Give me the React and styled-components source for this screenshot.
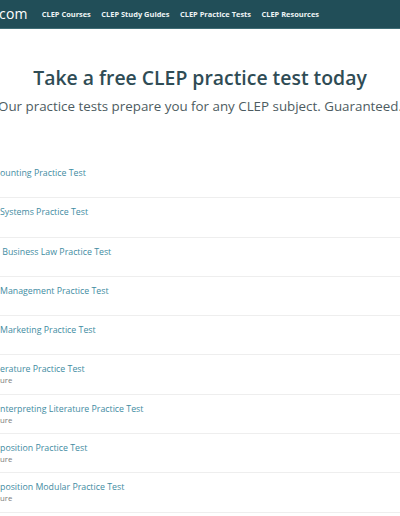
import React from "react";
import styled, { createGlobalStyle } from "styled-components";

const GlobalStyle = createGlobalStyle`
  html, body {
    margin: 0;
    padding: 0;
    background: #ffffff;
    font-family: "Open Sans", "Liberation Sans", sans-serif;
    overflow: hidden;
  }
`;

const tests = [
  { name: "ounting Practice Test" },
  { name: "Systems Practice Test" },
  { name: " Business Law Practice Test" },
  { name: "Management Practice Test" },
  { name: "Marketing Practice Test" },
  { name: "erature Practice Test", sub: "ure" },
  { name: "nterpreting Literature Practice Test", sub: "ure" },
  { name: "position Practice Test", sub: "ure" },
  { name: "position Modular Practice Test", sub: "ure" },
];

const Page = styled.div`
  width: 400px;
  height: 516px;
  overflow: hidden;
`;

const TopBar = styled.header`
  height: 29px;
  background: #214e58;
  border-bottom: 1px solid #3f6d76;
  display: flex;
  align-items: center;
  padding-bottom: 1px;
  box-sizing: border-box;
`;

const Logo = styled.span`
  color: #ffffff;
  font-size: 14px;
  letter-spacing: 0.2px;
  margin-right: 14px;
  margin-left: -1px;
`;

const Nav = styled.nav`
  display: flex;
  gap: 10.5px;
`;

const NavLink = styled.a`
  color: #eef4f5;
  font-size: 7.45px;
  font-weight: 700;
  white-space: nowrap;
`;

const Hero = styled.section`
  display: flex;
  flex-direction: column;
  align-items: center;
  padding-top: 36px;
  padding-bottom: 44px;
`;

const Title = styled.h1`
  margin: 0;
  color: #2f4c55;
  font-size: 19.4px;
  font-weight: 600;
  white-space: nowrap;
  line-height: 26px;
`;

const Subtitle = styled.p`
  margin: 6px 0 0;
  color: #4d5c61;
  font-size: 13.35px;
  white-space: nowrap;
  line-height: 18px;
`;

const List = styled.ul`
  list-style: none;
  margin: 0;
  padding: 0;
`;

const Row = styled.li`
  height: 39.3px;
  border-bottom: 1px solid #eeeeee;
  padding-top: 8px;
  box-sizing: border-box;
  display: flex;
  flex-direction: column;
`;

const TestLink = styled.a`
  color: #3f8ca2;
  font-size: 8.8px;
  line-height: 12px;
  white-space: pre;
`;

const Category = styled.span`
  color: #7b7b7b;
  font-size: 7.8px;
  line-height: 10px;
`;

export default function App() {
  return (
    <Page>
      <GlobalStyle />
      <TopBar>
        <Logo>com</Logo>
        <Nav>
          <NavLink>CLEP Courses</NavLink>
          <NavLink>CLEP Study Guides</NavLink>
          <NavLink>CLEP Practice Tests</NavLink>
          <NavLink>CLEP Resources</NavLink>
        </Nav>
      </TopBar>
      <Hero>
        <Title>Take a free CLEP practice test today</Title>
        <Subtitle>Our practice tests prepare you for any CLEP subject. Guaranteed.</Subtitle>
      </Hero>
      <List>
        {tests.map((t, i) => (
          <Row key={i}>
            <TestLink>{t.name}</TestLink>
            {t.sub && <Category>{t.sub}</Category>}
          </Row>
        ))}
      </List>
    </Page>
  );
}
